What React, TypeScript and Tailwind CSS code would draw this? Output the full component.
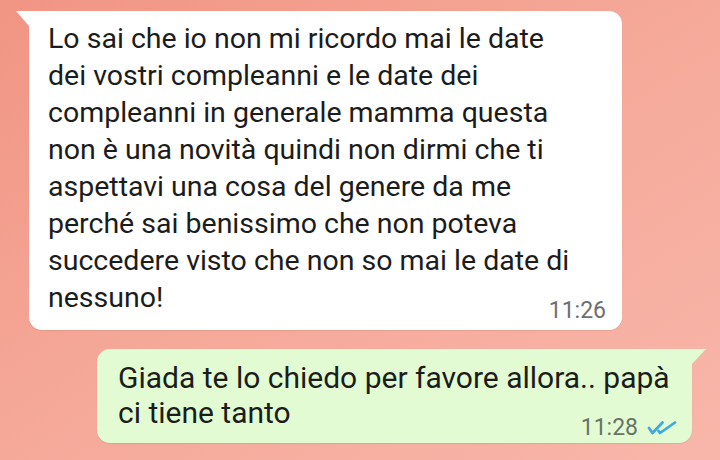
import React from 'react'

function DoubleCheck() {
  return (
    <svg width="30" height="14" viewBox="0 0 30 14" fill="none" className="ml-[9px] mt-[6px]">
      <path d="M2 7 L5.5 12 L15.5 1.5" stroke="#3da8e4" strokeWidth="2.7" strokeLinecap="round" strokeLinejoin="round" />
      <path d="M11.5 10 L13 12 L28 1.5" stroke="#3da8e4" strokeWidth="2.7" strokeLinecap="round" strokeLinejoin="round" />
    </svg>
  )
}

const incoming = [
  'Lo sai che io non mi ricordo mai le date',
  'dei vostri compleanni e le date dei',
  'compleanni in generale mamma questa',
  'non è una novità quindi non dirmi che ti',
  'aspettavi una cosa del genere da me',
  'perché sai benissimo che non poteva',
  'succedere visto che non so mai le date di',
  'nessuno!',
]

const outgoing = ['Giada te lo chiedo per favore allora.. papà', 'ci tiene tanto']

export default function App() {
  return (
    <div
      className="w-[720px] h-[460px] overflow-hidden bg-gradient-to-br from-[#f19584] via-[#f5a999] to-[#f8b6aa] pt-[11px] flex flex-col gap-[19px]"
      style={{ fontFamily: 'Roboto, "Noto Sans", sans-serif' }}
    >
      {/* received */}
      <div className="relative ml-[29px] w-[593px] bg-white rounded-[13px] rounded-tl-none pl-[19px] pr-[16px] pt-[9px] pb-[6px] shadow-[0_1px_1px_rgba(0,0,0,0.08)]">
        <div className="absolute left-[-13px] top-0 w-0 h-0 border-t-[15px] border-t-white border-l-[13px] border-l-transparent" />
        <div className="text-[28.5px] leading-[37px] text-[#1c1c1c]">
          {incoming.map((l) => (
            <div key={l}>{l}</div>
          ))}
        </div>
        <div className="flex justify-end -mt-[18px]">
          <span className="text-[23px] leading-[26px] text-[#6e6e6e]">11:26</span>
        </div>
      </div>

      {/* sent */}
      <div className="relative ml-auto mr-[28px] w-[595px] bg-[#e2fbd2] rounded-[13px] rounded-tr-none pl-[21px] pr-[15px] pt-[11px] pb-[2px] shadow-[0_1px_1px_rgba(0,0,0,0.08)]">
        <div className="absolute right-[-14px] top-0 w-0 h-0 border-t-[15px] border-t-[#e2fbd2] border-r-[14px] border-r-transparent" />
        <div className="text-[30px] leading-[35px] text-[#1c1c1c]">
          {outgoing.map((l) => (
            <div key={l}>{l}</div>
          ))}
        </div>
        <div className="flex justify-end items-start -mt-[15px]">
          <span className="text-[23px] leading-[26px] text-[#667366]">11:28</span>
          <DoubleCheck />
        </div>
      </div>
    </div>
  )
}
